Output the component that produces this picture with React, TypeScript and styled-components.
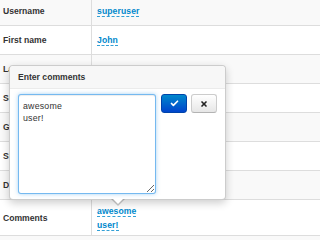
import styled, { createGlobalStyle } from "styled-components";
import { Check, X } from "lucide-react";

const GlobalStyle = createGlobalStyle`
    body {
        margin: 0;
        background: #fff;
        font-family: "Liberation Sans", Arial, sans-serif;
        color: #333;
        overflow: hidden;
    }
`;

const rows = [
    { label: "Username", value: "superuser" },
    { label: "First name", value: "John" },
    { label: "Last name", value: "" },
    { label: "Sex", value: "" },
    { label: "Group", value: "" },
    { label: "Status", value: "" },
    { label: "Date of birth", value: "" },
];

const App: React.FC = () => {
    return (
        <Page>
            <GlobalStyle />
            <Table>
                {rows.map((r, i) => (
                    <Row key={r.label} $striped={i % 2 === 0}>
                        <Label>{r.label}</Label>
                        <Value>{r.value && <Editable>{r.value}</Editable>}</Value>
                    </Row>
                ))}
                <Row $tall>
                    <Label>Comments</Label>
                    <Value>
                        <Multi>
                            <Editable>awesome</Editable>
                            <br />
                            <Editable>user!</Editable>
                        </Multi>
                    </Value>
                </Row>
                <Row $striped />
            </Table>

            <Popover>
                <PopoverTitle>Enter comments</PopoverTitle>
                <PopoverBody>
                    <TextArea defaultValue={"awesome\nuser!"} />
                    <Buttons>
                        <SubmitButton>
                            <Check size={9} strokeWidth={4.5} color="#fff" />
                        </SubmitButton>
                        <CancelButton>
                            <X size={8} strokeWidth={5} color="#222" />
                        </CancelButton>
                    </Buttons>
                </PopoverBody>
                <Arrow />
            </Popover>
        </Page>
    );
};

// Styled Components

const Page = styled.div`
    position: relative;
    width: 320px;
    height: 240px;
    overflow: hidden;
`;

const Table = styled.div`
    margin-top: -4px;
    display: flex;
    flex-direction: column;
`;

const Row = styled.div<{ $striped?: boolean; $tall?: boolean }>`
    display: flex;
    height: ${(p) => (p.$tall ? "35px" : "28px")};
    border-top: 1px solid #ddd;
    background-color: ${(p) => (p.$striped ? "#f9f9f9" : "#fff")};
`;

const Label = styled.div`
    width: 88px;
    padding-left: 3px;
    display: flex;
    align-items: center;
    font-size: 8.6px;
    font-weight: bold;
    color: #333;
`;

const Value = styled.div`
    flex: 1;
    border-left: 1px solid #ddd;
    padding-left: 5px;
    display: flex;
    align-items: center;
    font-size: 8.6px;
`;

const Multi = styled.div`
    line-height: 14px;
    margin-top: 1px;
`;

const Editable = styled.span`
    color: #0088cc;
    font-weight: bold;
    letter-spacing: 0.1px;
    border-bottom: 1px dashed rgba(0, 136, 204, 0.8);
`;

const Popover = styled.div`
    position: absolute;
    left: 9px;
    top: 65px;
    width: 215px;
    background: #fff;
    border: 1px solid rgba(0, 0, 0, 0.2);
    border-radius: 4px;
    box-shadow: 0 3px 8px rgba(0, 0, 0, 0.2);
`;

const PopoverTitle = styled.div`
    height: 22px;
    padding-left: 8px;
    display: flex;
    align-items: center;
    font-size: 8.6px;
    font-weight: bold;
    color: #333;
    background: #f7f7f7;
    border-bottom: 1px solid #ebebeb;
    border-radius: 4px 4px 0 0;
`;

const PopoverBody = styled.div`
    display: flex;
    align-items: flex-start;
    gap: 5px;
    padding: 5px 8px 5px 8px;
`;

const TextArea = styled.textarea`
    box-sizing: border-box;
    width: 140px;
    height: 100px;
    margin: 0;
    padding: 5px 4px;
    font-family: "Liberation Sans", Arial, sans-serif;
    font-size: 8.8px;
    letter-spacing: 0.2px;
    line-height: 12px;
    color: #333;
    border: 1px solid rgba(82, 168, 236, 0.8);
    border-radius: 3px;
    outline: none;
    box-shadow: inset 0 1px 1px rgba(0, 0, 0, 0.075), 0 0 4px rgba(82, 168, 236, 0.5);
`;

const Buttons = styled.div`
    display: flex;
    gap: 4px;
`;

const ButtonBase = styled.button`
    box-sizing: border-box;
    width: 26px;
    height: 19px;
    padding: 0;
    display: flex;
    align-items: center;
    justify-content: center;
    border-radius: 3px;
`;

const SubmitButton = styled(ButtonBase)`
    background: linear-gradient(#0088cc, #0044cc);
    border: 1px solid #0044aa;
`;

const CancelButton = styled(ButtonBase)`
    background: linear-gradient(#ffffff, #e6e6e6);
    border: 1px solid #ccc;
    border-bottom-color: #b3b3b3;
`;

const Arrow = styled.div`
    position: absolute;
    left: 101px;
    bottom: -7px;
    width: 0;
    height: 0;
    border-left: 7px solid transparent;
    border-right: 7px solid transparent;
    border-top: 7px solid rgba(0, 0, 0, 0.2);

    &::after {
        content: "";
        position: absolute;
        left: -6px;
        top: -8px;
        border-left: 6px solid transparent;
        border-right: 6px solid transparent;
        border-top: 6px solid #fff;
    }
`;

export default App;
